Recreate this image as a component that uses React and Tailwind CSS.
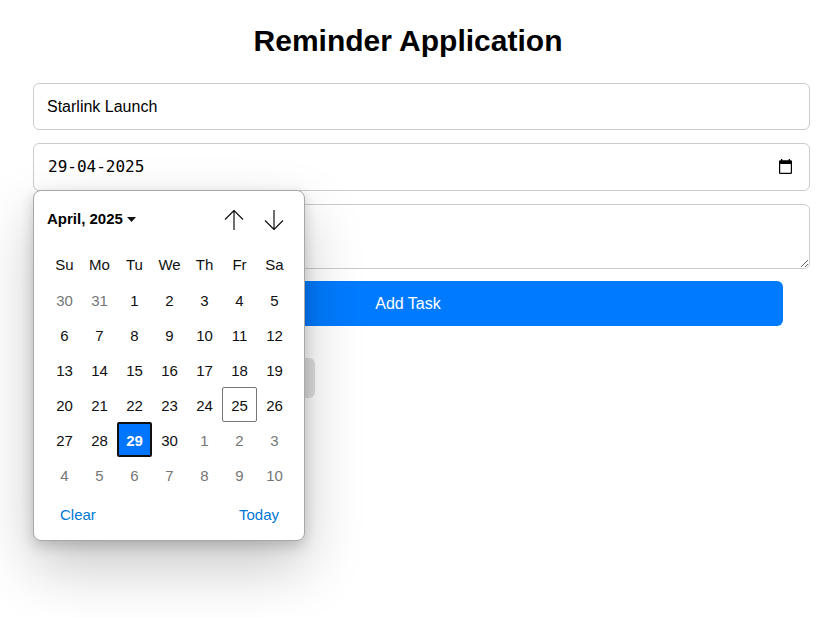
import { useState } from 'react';

const weekdays = ['Su', 'Mo', 'Tu', 'We', 'Th', 'Fr', 'Sa'];

// April 2025 starts on a Tuesday, so the grid opens on 30 March.
const firstDay = new Date(2025, 2, 30);
const weeks = Array.from({ length: 6 }, (_, week) =>
  Array.from({ length: 7 }, (_, day) => {
    const date = new Date(firstDay);
    date.setDate(firstDay.getDate() + week * 7 + day);
    return { day: date.getDate(), current: date.getMonth() === 3 };
  })
);

const field =
  'block w-full rounded-md border border-[#ccc] bg-white px-[13px] text-base text-black outline-none';

function dayStyle({ day, current }) {
  if (current && day === 29) return 'border-2 border-[#101010] bg-[#0075ff] font-bold text-white';
  if (current && day === 25) return 'border border-[#767676] text-[#101010]';
  return current ? 'text-[#101010]' : 'text-[#767676]';
}

function Arrow({ down }) {
  return (
    <svg width="20" height="20" viewBox="0 0 20 20" fill="none" stroke="#101010" strokeWidth="1.2">
      {down ? <path d="M10 0V19.5M1 10.5L10 19.5L19 10.5" /> : <path d="M10 20V.5M1 9.5L10 .5L19 9.5" />}
    </svg>
  );
}

function Calendar() {
  return (
    <div className="absolute top-full left-0 z-10 -mt-px w-68 rounded-lg border border-[#a8a8a8] bg-white pr-3 pb-0.5 pl-[13px] text-[15px] text-[#101010] shadow-[0_26px_58px_rgba(0,0,0,0.22),0_5px_14px_rgba(0,0,0,0.18)]">
      <div className="flex h-[57px] items-center justify-between">
        <button type="button" className="flex items-center gap-1 font-bold text-black">
          April, 2025
          <svg width="9" height="5" viewBox="0 0 9 5" fill="#101010">
            <path d="M0 0H9L4.5 5Z" />
          </svg>
        </button>
        <div className="flex gap-5 pr-2">
          <button type="button" aria-label="Previous month">
            <Arrow />
          </button>
          <button type="button" aria-label="Next month">
            <Arrow down />
          </button>
        </div>
      </div>
      <table className="w-[245px] table-fixed border-collapse text-center">
        <thead>
          <tr className="h-[34px]">
            {weekdays.map((name) => (
              <th key={name} scope="col" className="p-0 font-normal">
                {name}
              </th>
            ))}
          </tr>
        </thead>
        <tbody>
          {weeks.map((week, index) => (
            <tr key={index}>
              {week.map((cell) => (
                <td key={cell.day} className="p-0">
                  <button
                    type="button"
                    className={`flex size-[35px] items-center justify-center rounded-xs pt-1 ${dayStyle(cell)}`}
                  >
                    {cell.day}
                  </button>
                </td>
              ))}
            </tr>
          ))}
        </tbody>
      </table>
      <div className="flex h-[46px] items-center justify-between px-[13px] text-[#0078d4]">
        <button type="button">Clear</button>
        <button type="button">Today</button>
      </div>
    </div>
  );
}

export default function App() {
  const [task, setTask] = useState('Starlink Launch');
  const [date, setDate] = useState('29-04-2025');
  const [notes, setNotes] = useState('');

  return (
    <main className="min-h-screen pt-[23px] pr-[57px] pb-8 pl-[33px] font-['Liberation_Sans',Arial,sans-serif] text-black">
      <h1 className="text-center text-[30px] leading-9 font-bold">Reminder Application</h1>
      <form className="mt-6" onSubmit={(event) => event.preventDefault()}>
        <div className="-mr-[27px] flex flex-col gap-[13px]">
          <input
            type="text"
            aria-label="Task"
            className={`${field} h-[47px]`}
            value={task}
            onChange={(event) => setTask(event.target.value)}
          />
          <div className="relative">
            <div className={`${field} flex h-12 items-center justify-between`}>
              <input
                type="text"
                aria-label="Date"
                className="min-w-0 flex-1 bg-transparent pl-px font-['DejaVu_Sans_Mono',monospace] outline-none"
                value={date}
                onChange={(event) => setDate(event.target.value)}
              />
              <button type="button" aria-label="Open calendar" className="mr-[3px]">
                <svg width="15" height="16" viewBox="0 0 15 16">
                  <path
                    d="M3 0H4.3V1.3H10.7V0H12V1.3H12.7Q14 1.3 14 2.6V13.7Q14 15 12.7 15H2.3Q1 15 1 13.7V2.6Q1 1.3 2.3 1.3H3ZM2.2 5V13.8H12.8V5Z"
                    fill="#000"
                    fillRule="evenodd"
                  />
                </svg>
              </button>
            </div>
            <Calendar />
          </div>
          <textarea
            aria-label="Description"
            className={`${field} h-[65px] resize-y py-3`}
            value={notes}
            onChange={(event) => setNotes(event.target.value)}
          />
        </div>
        <button
          type="submit"
          className="mt-3 block h-[45px] w-full rounded-md bg-[#007bff] text-base text-white"
        >
          Add Task
        </button>
      </form>
      <div className="mt-8 h-10 w-[282px] rounded-md bg-[#e0e0e0]" />
    </main>
  );
}
